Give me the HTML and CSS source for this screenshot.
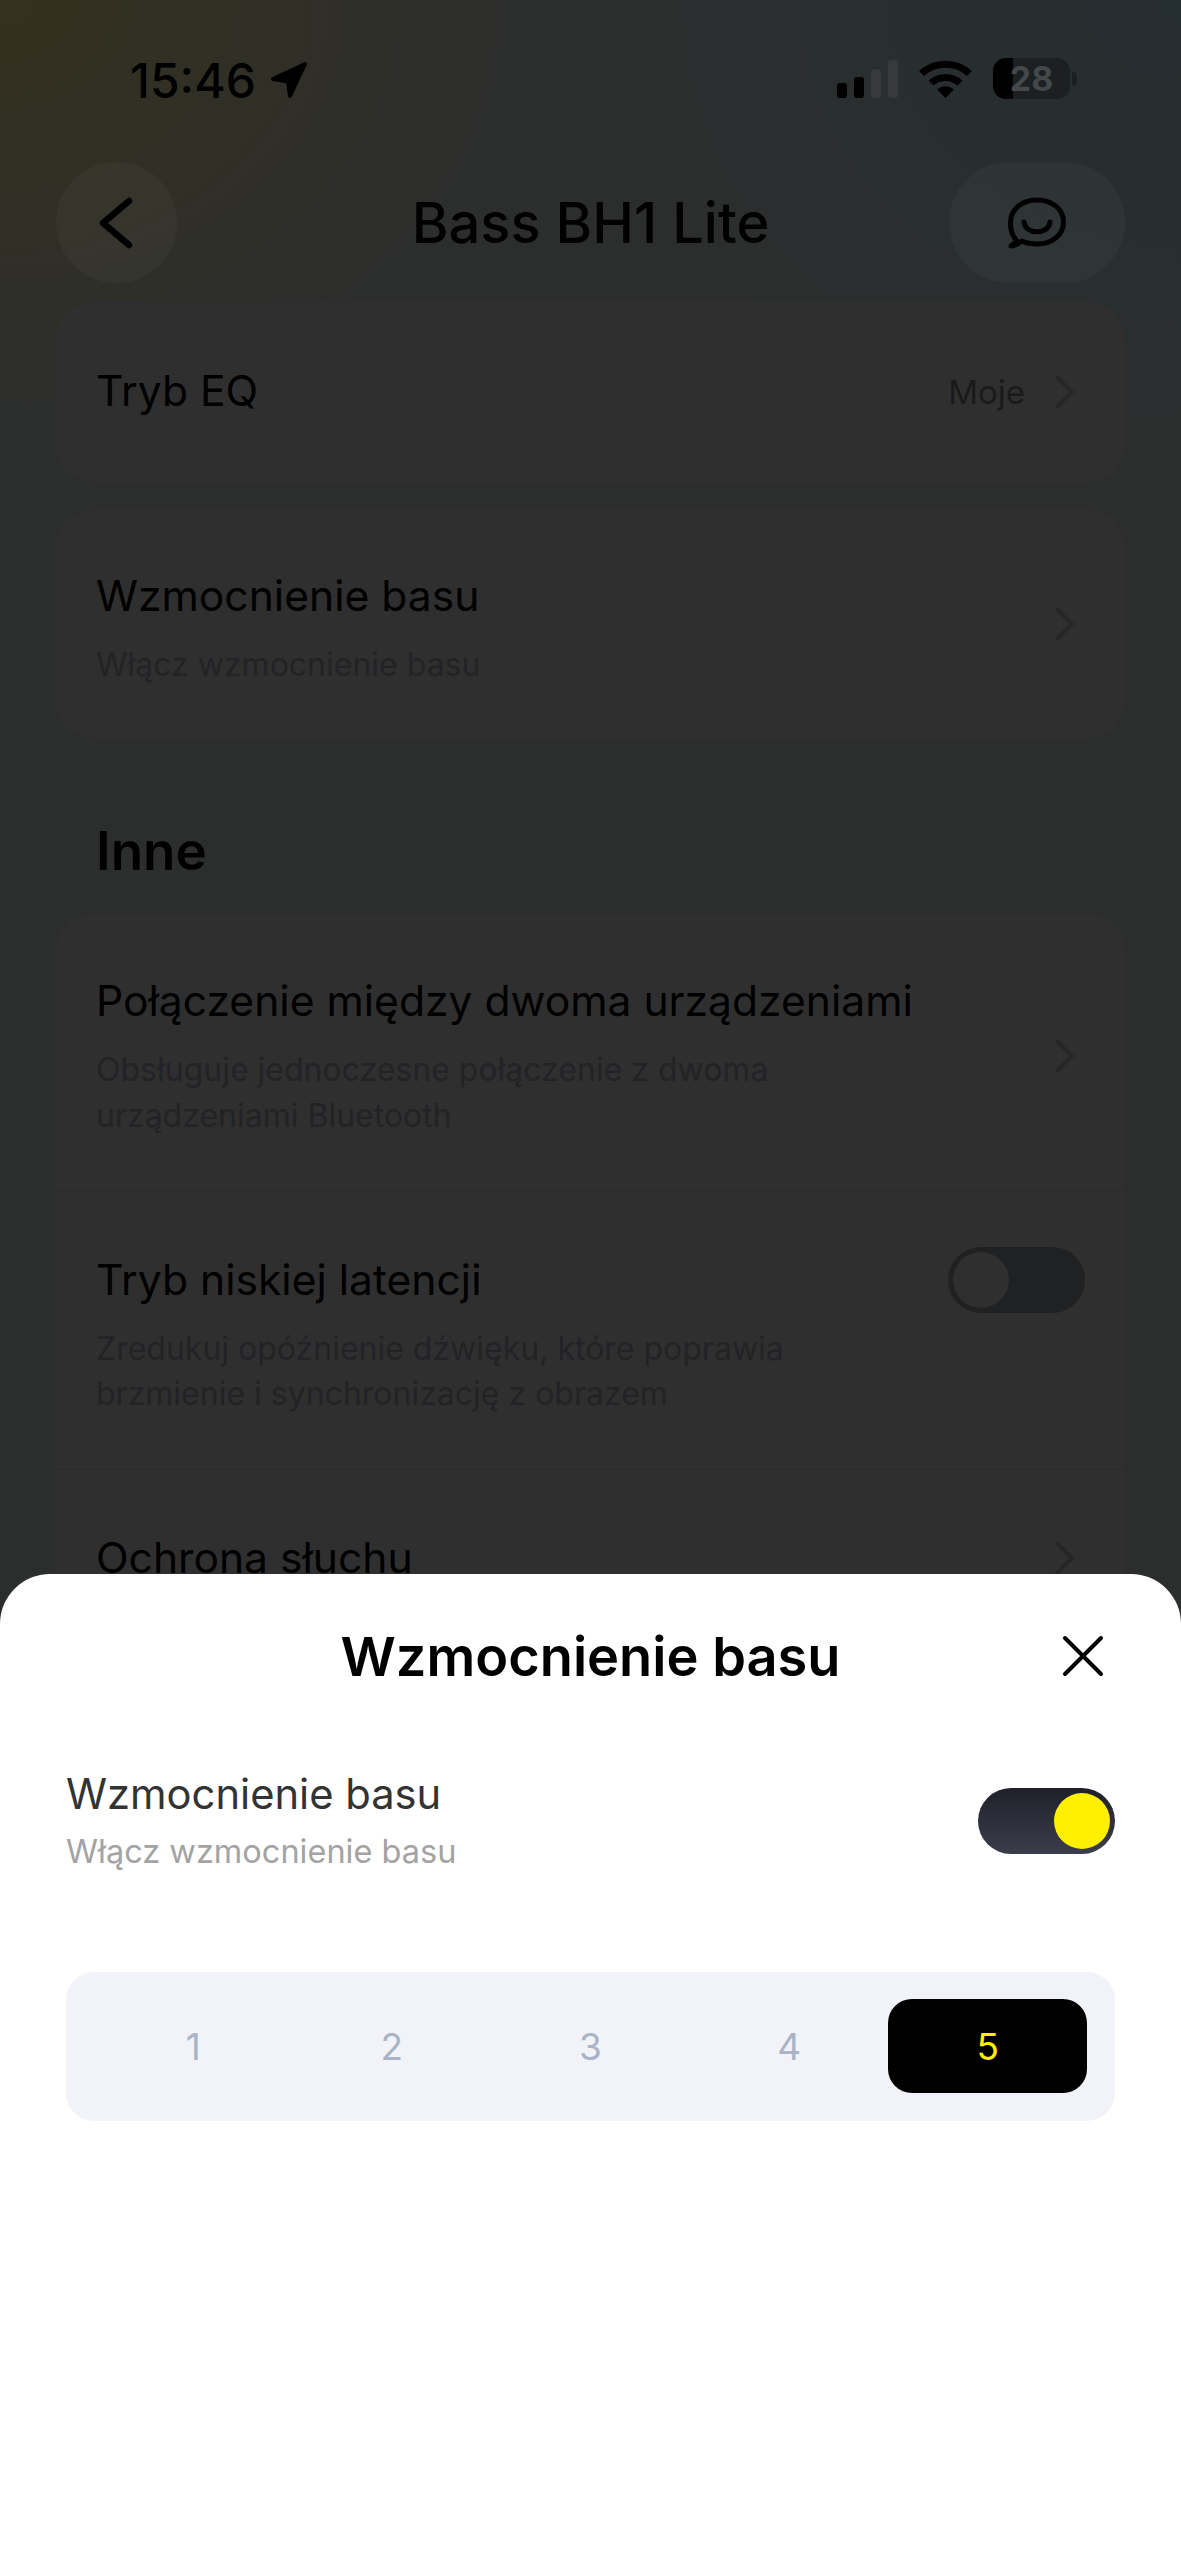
FILE: index.html
```html
<!DOCTYPE html>
<html lang="pl">
<head>
  <meta charset="UTF-8" />
  <meta name="viewport" content="width=device-width, initial-scale=1" />
  <title>Bass BH1 Lite</title>
  <link rel="stylesheet" href="styles.css">
</head>
<body>
  <div class="screen">
    <div class="statusbar">
      <div class="status-left">
        <span class="time">15:46</span>
        <svg class="loc" width="38" height="38" viewBox="0 0 38 38"><path d="M35 3 L3 18 L18 20.5 L20 35 Z" fill="#000" stroke="#000" stroke-width="4" stroke-linejoin="round"/></svg>
      </div>
      <div class="status-right">
        <div class="signal">
          <i class="bar b1"></i><i class="bar b2"></i><i class="bar b3 off"></i><i class="bar b4 off"></i>
        </div>
        <svg class="wifi" width="53" height="38" viewBox="0 0 53 38">
          <path d="M2.5 13.5 C16 1 37 1 50.5 13.5" fill="none" stroke="#000" stroke-width="7"/>
          <path d="M12 23 C20 15.5 33 15.5 41 23" fill="none" stroke="#000" stroke-width="7"/>
          <path d="M18 29.5 C23 25 30 25 35 29.5 L26.5 38 Z" fill="#000"/>
        </svg>
        <div class="battery">
          <div class="battery-body"><div class="battery-fill"></div><span class="battery-num">28</span></div>
          <div class="battery-cap"></div>
        </div>
      </div>
    </div>

    <div class="navbar">
      <button class="nav-btn back">
        <svg width="40" height="56" viewBox="0 0 40 56"><path d="M32 6 L6 28 L32 50" fill="none" stroke="#000" stroke-width="6.5" stroke-linecap="round" stroke-linejoin="round"/></svg>
      </button>
      <div class="nav-title">Bass BH1 Lite</div>
      <button class="nav-btn chat">
        <svg width="60" height="52" viewBox="0 0 60 52"><path d="M10 44 C4 38 3.5 31 3.5 26 C3.5 12 15 3 30 3 C45 3 56.5 12 56.5 25 C56.5 38 45 47 30 47 C24 47 19 46 15 44 C11 47 8 49 4 49 C6 47 9 46 10 44 Z" fill="none" stroke="#000" stroke-width="5" stroke-linejoin="round"/><path d="M17 25 C18 38 42 38 43 25" fill="none" stroke="#000" stroke-width="5" stroke-linecap="round"/></svg>
      </button>
    </div>

    <div class="card card-eq">
      <div class="row-title">Tryb EQ</div>
      <div class="row-right">
        <span class="row-value">Moje</span>
        <svg class="chev" width="22" height="36" viewBox="0 0 22 36"><path d="M3 2 L19 18 L3 34" fill="none" stroke="#242527" stroke-width="3.2"/></svg>
      </div>
    </div>

    <div class="card card-bass">
      <div class="row-text">
        <div class="row-title">Wzmocnienie basu</div>
        <div class="row-sub">Włącz wzmocnienie basu</div>
      </div>
      <svg class="chev" width="22" height="36" viewBox="0 0 22 36"><path d="M3 2 L19 18 L3 34" fill="none" stroke="#242527" stroke-width="3.2"/></svg>
    </div>

    <h2 class="section-title">Inne</h2>

    <div class="card-list">
      <div class="list-row row-dual">
        <div class="row-text">
          <div class="row-title">Połączenie między dwoma urządzeniami</div>
          <div class="row-sub">Obsługuje jednoczesne połączenie z dwoma<br>urządzeniami Bluetooth</div>
        </div>
        <svg class="chev" width="22" height="36" viewBox="0 0 22 36"><path d="M3 2 L19 18 L3 34" fill="none" stroke="#242527" stroke-width="3.2"/></svg>
      </div>
      <div class="list-row row-latency">
        <div class="row-text">
          <div class="row-title">Tryb niskiej latencji</div>
          <div class="row-sub">Zredukuj opóźnienie dźwięku, które poprawia<br>brzmienie i synchronizację z obrazem</div>
        </div>
        <div class="toggle-off"><div class="toggle-off-knob"></div></div>
      </div>
      <div class="list-row row-hearing">
        <div class="row-title">Ochrona słuchu</div>
        <svg class="chev" width="22" height="36" viewBox="0 0 22 36"><path d="M3 2 L19 18 L3 34" fill="none" stroke="#242527" stroke-width="3.2"/></svg>
      </div>
    </div>
  </div>

  <div class="sheet">
    <div class="sheet-head">
      <div class="sheet-title">Wzmocnienie basu</div>
      <svg class="sheet-close" width="42" height="42" viewBox="0 0 42 42"><path d="M3 3 L39 39 M39 3 L3 39" fill="none" stroke="#000" stroke-width="4" stroke-linecap="round"/></svg>
    </div>
    <div class="sheet-row">
      <div>
        <div class="sheet-label">Wzmocnienie basu</div>
        <div class="sheet-sub">Włącz wzmocnienie basu</div>
      </div>
      <div class="toggle-on"><div class="toggle-on-knob"></div></div>
    </div>
    <div class="levels">
      <div class="level">1</div>
      <div class="level">2</div>
      <div class="level">3</div>
      <div class="level">4</div>
      <div class="level active">5</div>
    </div>
  </div>
</body>
</html>
```
FILE: styles.css
```css
* { box-sizing: border-box; }
html, body { margin: 0; padding: 0; }
body {
  position: relative;
  width: 1181px;
  height: 2560px;
  overflow: hidden;
  font-family: Inter, "Liberation Sans", Arial, sans-serif;
  background: #fff;
  color: #000;
}

/* dimmed page behind the sheet */
.screen {
  height: 2560px;
  padding: 0 56px;
  background:
    radial-gradient(ellipse 520px 420px at 0 0, rgba(62,52,14,.48), rgba(62,52,14,0) 100%),
    radial-gradient(ellipse 620px 520px at 100% 0, rgba(30,46,54,.45), rgba(30,46,54,0) 100%),
    #2c2e2d;
}

.statusbar {
  display: flex;
  justify-content: space-between;
  height: 162px;
  padding: 58px 48px 0 74px;
}
.status-left { display: flex; align-items: flex-start; height: 42px; }
.time { font-size: 48px; font-weight: 500; line-height: 46px; }
.loc { margin: 3px 0 0 14px; }
.status-right { display: flex; align-items: flex-start; }
.signal { display: flex; align-items: flex-end; gap: 7px; height: 38px; margin: 2px 21px 0 0; }
.bar { display: block; width: 10px; background: #000; border-radius: 3px; }
.bar.off { background: #363a3c; }
.b1 { height: 15px; }
.b2 { height: 21px; }
.b3 { height: 29px; }
.b4 { height: 38px; }
.wifi { margin: 2px 21px 0 0; }
.battery { display: flex; align-items: center; height: 41px; }
.battery-body {
  position: relative;
  width: 77px;
  height: 41px;
  background: #1c2022;
  border-radius: 13px;
  overflow: hidden;
  display: flex;
  align-items: center;
  justify-content: center;
}
.battery-fill { position: absolute; left: 0; top: 0; bottom: 0; width: 20px; background: #000; }
.battery-num { position: relative; color: #44484a; font-size: 34px; font-weight: 700; line-height: 41px; }
.battery-cap { width: 5px; height: 14px; margin-left: 2px; background: #1c2022; border-radius: 0 4px 4px 0; }

.navbar {
  display: grid;
  grid-template-columns: 176px 1fr 176px;
  align-items: center;
  height: 121px;
  margin-bottom: 19px;
}
.nav-btn {
  display: flex;
  align-items: center;
  justify-content: center;
  height: 121px;
  padding: 0;
  border: 0;
  border-radius: 61px;
  background: rgba(255,255,255,.03);
}
.back { width: 121px; }
.chat { width: 176px; }
.nav-title { font-size: 56px; font-weight: 500; text-align: center; }

.card, .card-list {
  background: #2f2f2f;
  border-radius: 38px;
}
.card { display: flex; align-items: center; justify-content: space-between; padding: 0 50px 0 40px; }
.card-eq { height: 180px; margin-bottom: 28px; }
.card-eq .row-title { margin-bottom: 2px; }
.card-bass { height: 228px; }
.card-bass .row-text { padding-top: 9px; }
.row-right { display: flex; align-items: center; }
.row-value { font-size: 33px; color: #1a1a1b; margin-right: 28px; }
.row-title { font-size: 42.6px; line-height: 52px; color: #000; white-space: nowrap; }
.row-sub { font-size: 32px; line-height: 45.5px; color: #222326; margin-top: 20px; }

.section-title { margin: 0 0 35px 40px; padding-top: 85px; font-size: 53px; font-weight: 600; line-height: 56px; }

.card-list { height: 900px; }
.list-row {
  display: flex;
  justify-content: space-between;
  padding: 0 50px 0 40px;
  border-bottom: 1px solid #2b2b2b;
}
.row-dual { height: 277px; padding-top: 61px; align-items: flex-start; }
.row-dual .chev { margin-top: 63px; }
.row-latency { height: 279px; padding-top: 62.5px; padding-right: 40px; }
.row-hearing { padding-top: 61.5px; border-bottom: 0; }
.row-hearing .chev { margin-top: 8px; }

.toggle-off { width: 137px; height: 66px; margin-top: -6.5px; padding: 5px; background: #202122; border-radius: 33px; }
.toggle-off-knob { width: 56px; height: 56px; background: #2f2f2f; border-radius: 50%; }

.sheet {
  position: absolute;
  left: 0;
  right: 0;
  top: 1574px;
  bottom: 0;
  padding: 0 66px;
  background: #fff;
  border-radius: 50px 50px 0 0;
}
.sheet-head {
  position: relative;
  height: 164px;
  padding-top: 50px;
  text-align: center;
}
.sheet-title { font-size: 54.2px; font-weight: 600; line-height: 64px; }
.sheet-close { position: absolute; right: 11.5px; top: 61px; }
.sheet-row { display: flex; align-items: center; justify-content: space-between; height: 166px; margin-bottom: 68px; }
.sheet-label { font-size: 41.7px; line-height: 52px; color: #333; }
.sheet-sub { font-size: 32.5px; line-height: 44px; color: #a3a3a3; margin-top: 9.5px; }
.toggle-on {
  display: flex;
  justify-content: flex-end;
  width: 137px;
  height: 66px;
  padding: 5px;
  background: linear-gradient(#1f2029, #3b3d4a);
  border-radius: 33px;
}
.toggle-on-knob { width: 56px; height: 56px; background: #fff000; border-radius: 50%; }

.levels {
  display: flex;
  height: 149px;
  padding: 27px 28px 28px;
  background: #f2f3f8;
  border-radius: 28px;
}
.level {
  flex: 1;
  display: flex;
  align-items: center;
  justify-content: center;
  color: #a9b4c6;
  font-size: 37px;
}
.level.active { background: #000; color: #fff000; border-radius: 24px; }
```
